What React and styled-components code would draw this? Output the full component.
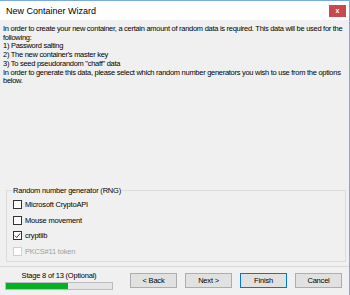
import React from 'react';
import styled, { createGlobalStyle } from 'styled-components';

const Global = createGlobalStyle`
  html, body { margin: 0; padding: 0; background: #f0f0f0; }
  body { font-family: "Liberation Sans", Arial, sans-serif; }
`;

const Window = styled.div`
  width: 350px;
  height: 295px;
  box-sizing: border-box;
  border-top: 1px solid #7aa9df;
  border-right: 1px solid #7aa9df;
  background: #f0f0f0;
  display: flex;
  flex-direction: column;
  overflow: hidden;
`;

const TitleBar = styled.div`
  height: 19px;
  background: #fff;
  display: flex;
  align-items: center;
  justify-content: space-between;
  padding: 0 3px 0 6px;
  flex-shrink: 0;
`;

const Title = styled.span`
  font-size: 9px;
  color: #000;
`;

const CloseButton = styled.div`
  width: 17px;
  height: 12px;
  background: #c9484c;
  color: #fff;
  font-size: 7px;
  font-weight: bold;
  display: flex;
  align-items: center;
  justify-content: center;
  line-height: 1;
`;

const Body = styled.div`
  display: flex;
  flex-direction: column;
  padding: 5px 3px 0 3px;
  flex-shrink: 0;
`;

const Intro = styled.div`
  font-size: 7.5px;
  letter-spacing: -0.28px;
  line-height: 8.7px;
  color: #000;
  height: 161px;
`;

const Group = styled.fieldset`
  margin: 0 0 0 3px;
  padding: 4px 0 4px 6px;
  border: 1px solid #dcdcdc;
  height: 66px;
  display: flex;
  flex-direction: column;
  gap: 4.7px;
`;

const Legend = styled.legend`
  font-size: 7.5px;
  letter-spacing: -0.2px;
  padding: 0 1px;
  margin-left: -1px;
  color: #000;
`;

const CheckRow = styled.label`
  display: flex;
  align-items: center;
  gap: 3px;
  font-size: 7.5px;
  letter-spacing: -0.2px;
  height: 11px;
  color: ${p => (p.$disabled ? '#a0a0a0' : '#000')};
`;

const Box = styled.span`
  width: 9px;
  height: 9px;
  box-sizing: border-box;
  border: 1px solid ${p => (p.$disabled ? '#cfcfcf' : '#333')};
  background: #fff;
  display: flex;
  align-items: center;
  justify-content: center;
`;

const Separator = styled.div`
  height: 1px;
  background: #d8d8d8;
  margin: 4px 0 0 0;
  flex-shrink: 0;
`;

const Footer = styled.div`
  display: flex;
  align-items: flex-start;
  padding: 4px 0 0 5px;
  height: 26px;
  flex-shrink: 0;
`;

const Stage = styled.div`
  width: 108px;
  display: flex;
  flex-direction: column;
  align-items: center;
  gap: 2px;
`;

const StageText = styled.div`
  font-size: 7.5px;
  letter-spacing: -0.2px;
  color: #000;
`;

const Progress = styled.div`
  width: 108px;
  height: 8px;
  box-sizing: border-box;
  border: 1px solid #bcbcbc;
  background: #e6e6e6;
`;

const Fill = styled.div`
  height: 100%;
  background: #06b025;
`;

const Buttons = styled.div`
  display: flex;
  gap: 8px;
  margin-left: 17px;
  margin-top: 2px;
`;

const Button = styled.div`
  width: 47px;
  height: 15px;
  box-sizing: border-box;
  border: 1px solid ${p => (p.$primary ? '#0078d7' : '#adadad')};
  background: #e1e1e1;
  font-size: 7.5px;
  letter-spacing: -0.2px;
  color: #000;
  display: flex;
  align-items: center;
  justify-content: center;
`;

const Check = ({ checked, disabled, children }) => (
  <CheckRow $disabled={disabled}>
    <Box $disabled={disabled}>
      {checked && (
        <svg width="7" height="7" viewBox="0 0 7 7">
          <path d="M0.8 3.6 L2.7 5.5 L6.2 1.4" fill="none" stroke="#222" strokeWidth="0.9" />
        </svg>
      )}
    </Box>
    {children}
  </CheckRow>
);

export default function App() {
  return (
    <Window>
      <Global />
      <TitleBar>
        <Title>New Container Wizard</Title>
        <CloseButton>x</CloseButton>
      </TitleBar>
      <Body>
        <Intro>
          In order to create your new container, a certain amount of random data is required. This data will be used for the following:
          <br />1) Password salting
          <br />2) The new container's master key
          <br />3) To seed pseudorandom "chaff" data
          <br />In order to generate this data, please select which random number generators you wish to use from the options below.
        </Intro>
        <Group>
          <Legend>Random number generator (RNG)</Legend>
          <Check>Microsoft CryptoAPI</Check>
          <Check>Mouse movement</Check>
          <Check checked>cryptlib</Check>
          <Check disabled>PKCS#11 token</Check>
        </Group>
      </Body>
      <Separator />
      <Footer>
        <Stage>
          <StageText>Stage 8 of 13 (Optional)</StageText>
          <Progress>
            <Fill style={{ width: `${(8 / 13) * 100 - 3}%` }} />
          </Progress>
        </Stage>
        <Buttons>
          <Button>&lt; Back</Button>
          <Button>Next &gt;</Button>
          <Button $primary>Finish</Button>
          <Button>Cancel</Button>
        </Buttons>
      </Footer>
    </Window>
  );
}
